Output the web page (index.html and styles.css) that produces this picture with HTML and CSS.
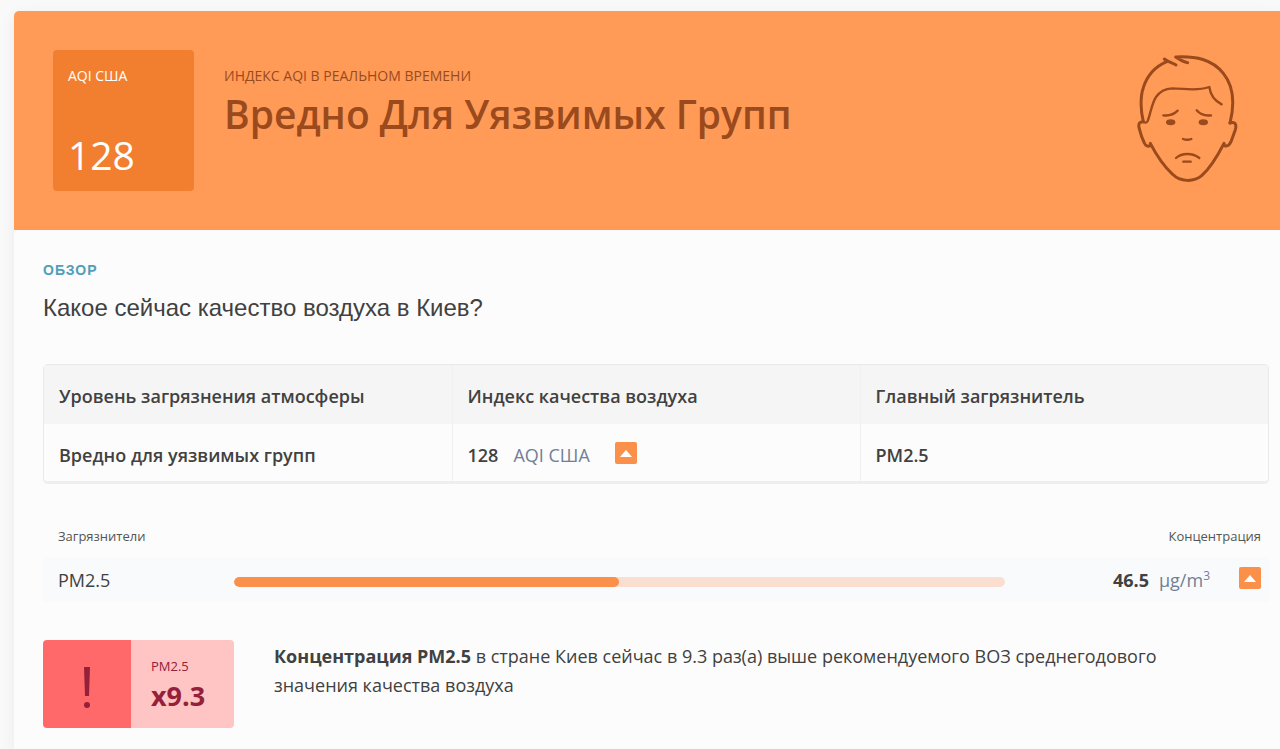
FILE: index.html
```html
<!DOCTYPE html>
<html lang="ru">
<head>
<meta charset="utf-8">
<title>Качество воздуха в Киев</title>
<link rel="stylesheet" href="styles.css">
</head>
<body>
<main class="card">
  <header class="hero">
    <div class="aqi">
      <span class="aqi-label">AQI США</span>
      <span class="aqi-value">128</span>
    </div>
    <div class="status">
      <p class="status-label">ИНДЕКС AQI В РЕАЛЬНОМ ВРЕМЕНИ</p>
      <h1 class="status-title">Вредно Для Уязвимых Групп</h1>
    </div>
    <svg class="face" viewBox="80 40 306 393" fill="none" stroke="#9a4a1c" stroke-width="9" stroke-linecap="round" stroke-linejoin="round" aria-hidden="true">
      <path d="M102 246C94 215 92 172 102 144C113 108 138 80 174 65"/>
      <path d="M165 58C176 67 190 70 200 76"/>
      <path d="M235 69C220 67 208 58 199 52C260 49 308 59 342 101C376 143 376 194 362 250"/>
      <path d="M102 246C90 246 87 252 89 264C93 280 98 296 105 310C109 319 116 322 123 318L123 311C143 350 164 380 190 404C212 427 253 428 277 408C306 382 325 348 344 311L345 318C354 322 361 315 365 306L378 270C382 255 379 245 362 250"/>
      <path stroke-width="7" d="M102 247C107 250 112 250 115 244C124 221 127 192 140 172C151 156 170 147 188 146C226 146 260 156 300 142C303 165 317 184 337 194"/>
      <path stroke-width="7" d="M162 227C178 229 194 224 205 213M262 212C272 224 288 229 305 227M221 298C229 301 238 301 246 298M200 355C218 339 250 339 270 355M222 366H244"/>
      <ellipse cx="184" cy="248" rx="14" ry="9" fill="#9a4a1c" stroke="none"/>
      <ellipse cx="282" cy="248" rx="14" ry="9" fill="#9a4a1c" stroke="none"/>
    </svg>
  </header>
  <section class="content">
    <p class="eyebrow">ОБЗОР</p>
    <h2 class="question">Какое сейчас качество воздуха в Киев?</h2>
    <div class="summary-frame">
      <table class="summary">
        <thead>
          <tr><th scope="col">Уровень загрязнения атмосферы</th><th scope="col">Индекс качества воздуха</th><th scope="col">Главный загрязнитель</th></tr>
        </thead>
        <tbody>
          <tr>
            <td>Вредно для уязвимых групп</td>
            <td><div class="index">128 <span class="index-unit">AQI США</span><svg class="trend" viewBox="0 0 22 22" aria-hidden="true"><path d="M5 15L11 8L17 15Z" fill="#fff"/></svg></div></td>
            <td>PM2.5</td>
          </tr>
        </tbody>
      </table>
    </div>
    <table class="pollutants">
      <colgroup><col class="col-name"><col><col class="col-reading"></colgroup>
      <thead>
        <tr><th scope="col">Загрязнители</th><th scope="col" class="reading" colspan="2">Концентрация</th></tr>
      </thead>
      <tbody>
        <tr>
          <td>PM2.5</td>
          <td class="level"><div class="bar"><div class="bar-fill" style="width: 50%"></div></div></td>
          <td class="reading"><div class="measure"><strong>46.5</strong><span class="unit">µg/m<sup>3</sup></span><svg class="trend" viewBox="0 0 22 22" aria-hidden="true"><path d="M5 15L11 8L17 15Z" fill="#fff"/></svg></div></td>
        </tr>
      </tbody>
    </table>
    <div class="notice">
      <div class="badge">
        <div class="badge-mark">
          <svg class="mark" viewBox="0 0 10 44" fill="#94203a" aria-hidden="true"><path d="M2 1H8L7 30H3Z"/><circle cx="5" cy="39" r="3"/></svg>
        </div>
        <div class="badge-text">
          <span class="badge-label">PM2.5</span>
          <strong class="badge-value">x9.3</strong>
        </div>
      </div>
      <p class="notice-text"><strong>Концентрация PM2.5</strong> в стране Киев сейчас в 9.3 раз(а) выше рекомендуемого ВОЗ среднегодового значения качества воздуха</p>
    </div>
  </section>
</main>
</body>
</html>
```
FILE: styles.css
```css
* { box-sizing: border-box; }
body {
  margin: 0;
  background: #f9f9f9;
  color: #414141;
  font: 18px/28px "Open Sans", "Noto Sans", sans-serif;
  overflow-x: hidden;
}
p, h1, h2 { margin: 0; }
.card {
  margin: 11px 0 0 14px;
  min-height: calc(100vh - 11px);
  border-radius: 5px 0 0 0;
  background: #fcfcfc;
  box-shadow: 0 4px 16px rgba(0, 0, 0, 0.06);
}
.hero {
  display: flex;
  align-items: flex-start;
  gap: 30px;
  padding: 39px 42px 39px 39px;
  border-radius: 5px 0 0 0;
  background: #ff9b57;
  color: #9a4a1c;
}
.aqi {
  display: flex;
  flex-direction: column;
  justify-content: space-between;
  flex: none;
  width: 141px;
  height: 141px;
  padding: 16px 15px 8px;
  border-radius: 4px;
  background: #f27f2f;
  color: #fff;
}
.aqi-label { font-size: 14px; line-height: 20px; }
.aqi-value { font-size: 39px; line-height: 56px; }
.status { flex: 1; }
.status-label { padding-top: 16px; font-size: 14px; line-height: 20px; font-weight: 500; }
.status-title { font-size: 39px; line-height: 56px; font-weight: 600; }
.face { flex: none; width: 102px; height: 131px; margin-top: 3px; }
.content { padding: 30px 11px 22px 29px; }
.eyebrow {
  color: #4f9fb8;
  font: bold 14px/20px "Liberation Sans", sans-serif;
  letter-spacing: 1px;
}
.question { margin-top: 14px; font: 24px/28px "Liberation Sans", sans-serif; }
.summary-frame {
  margin-top: 42px;
  border: 1px solid #e8e9eb;
  border-bottom: 3px solid #eceef1;
  border-radius: 5px;
  overflow: hidden;
}
table { width: 100%; border-collapse: collapse; table-layout: fixed; }
th, td { padding: 0 15px; text-align: left; }
.summary { font-weight: 600; }
.summary th { height: 59px; padding-top: 2px; font-weight: 600; background: #f5f5f5; }
.summary td { height: 57px; padding-top: 4px; }
.summary th + th, .summary td + td { border-left: 1px solid #f1f1f1; }
.index { display: flex; align-items: center; }
.index-unit { margin: 0 25px 0 15px; color: #718096; font-weight: 400; }
.trend { flex: none; width: 22px; height: 22px; border-radius: 2px; background: #fa9049; margin-bottom: 4px; }
.pollutants { margin-top: 38px; }
.pollutants th { height: 35px; padding-bottom: 7px; color: #555; font-size: 13px; line-height: 20px; font-weight: 400; }
.pollutants tbody { background: #f9fafc; }
.pollutants td { height: 45px; }
.col-name { width: 191px; }
.col-reading { width: 264px; }
.pollutants th.reading { text-align: right; padding-right: 8px; }
.pollutants td.level { padding: 4px 0 0; }
.pollutants td.reading { padding-right: 8px; }
.bar { height: 10px; border-radius: 5px; background: #fadfd0; overflow: hidden; }
.bar-fill { height: 100%; border-radius: 5px; background: #fa9049; }
.measure { display: flex; align-items: center; justify-content: flex-end; }
.unit { margin: 0 29px 0 10px; color: #718096; }
sup { font-size: 12px; line-height: 0; }
.notice { display: flex; gap: 40px; margin-top: 38px; }
.badge { display: flex; flex: none; width: 191px; height: 88px; border-radius: 4px; overflow: hidden; color: #94203a; }
.badge-mark { display: grid; place-items: center; width: 88px; padding-top: 8px; background: #ff6969; }
.mark { width: 10px; height: 44px; }
.badge-text { display: flex; flex-direction: column; flex: 1; padding: 16px 20px; background: #ffc4c4; }
.badge-label { font-size: 13px; line-height: 20px; }
.badge-value { font-size: 27px; line-height: 40px; }
.notice-text { flex: 1; padding-top: 2px; line-height: 29px; max-width: 920px; }
```
